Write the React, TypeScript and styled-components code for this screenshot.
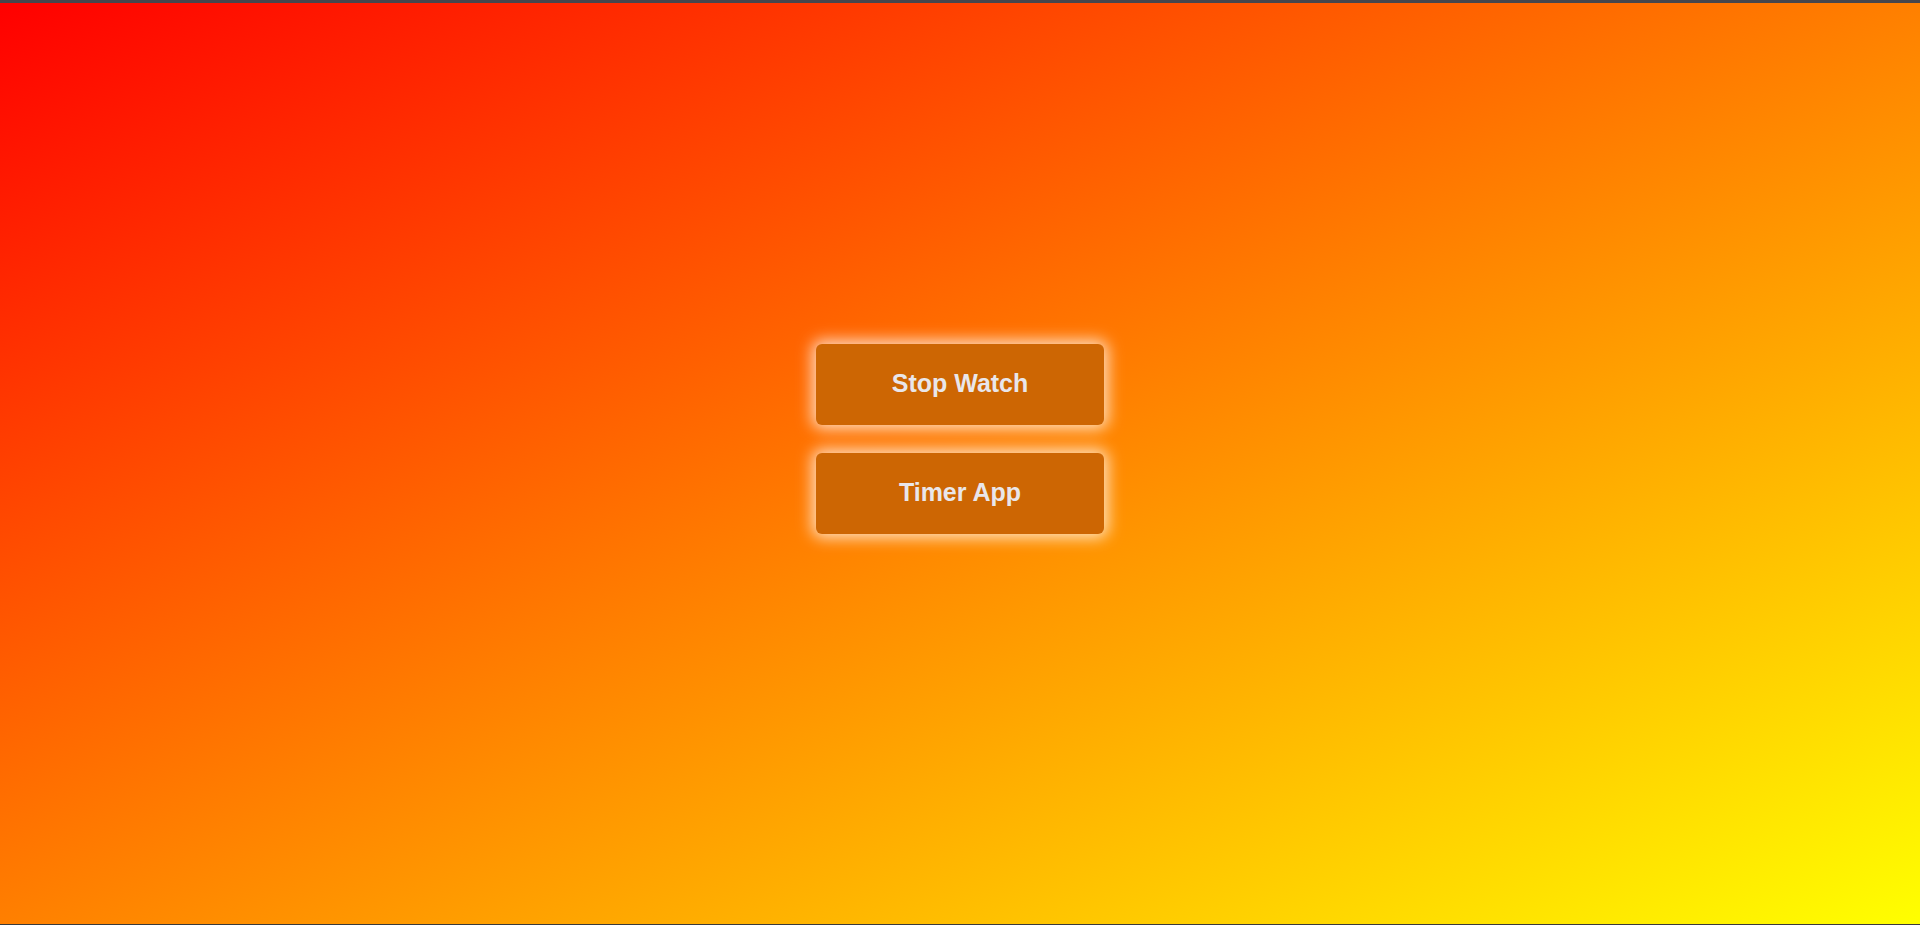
import React from "react";
import styled, { createGlobalStyle } from "styled-components";

const GlobalStyle = createGlobalStyle`
  html, body {
    margin: 0;
    padding: 0;
    height: 100%;
    overflow: hidden;
  }
  body {
    font-family: "Liberation Sans", Arial, sans-serif;
  }
  * { box-sizing: border-box; }
`;

const Page = styled.div`
  height: 925px;
  border-top: 3px solid #46464e;
  border-bottom: 1px solid #3a3a3a;
  background: linear-gradient(to bottom right, #ff0000, #ffff00);
  display: flex;
  flex-direction: column;
  align-items: center;
  justify-content: center;
  gap: 28px;
  padding-bottom: 50px;
`;

const MenuButton = styled.button`
  width: 288px;
  height: 81px;
  padding: 0 0 2px;
  border: none;
  border-radius: 6px;
  background: #cd6603;
  color: #e9e6ea;
  font-family: "Liberation Sans", Arial, sans-serif;
  font-size: 25px;
  font-weight: 700;
  cursor: pointer;
  box-shadow: 0 0 15px 4px rgba(255, 255, 255, 0.75);
`;

export default function App() {
  return (
    <>
      <GlobalStyle />
      <Page>
        <MenuButton>Stop Watch</MenuButton>
        <MenuButton>Timer App</MenuButton>
      </Page>
    </>
  );
}
